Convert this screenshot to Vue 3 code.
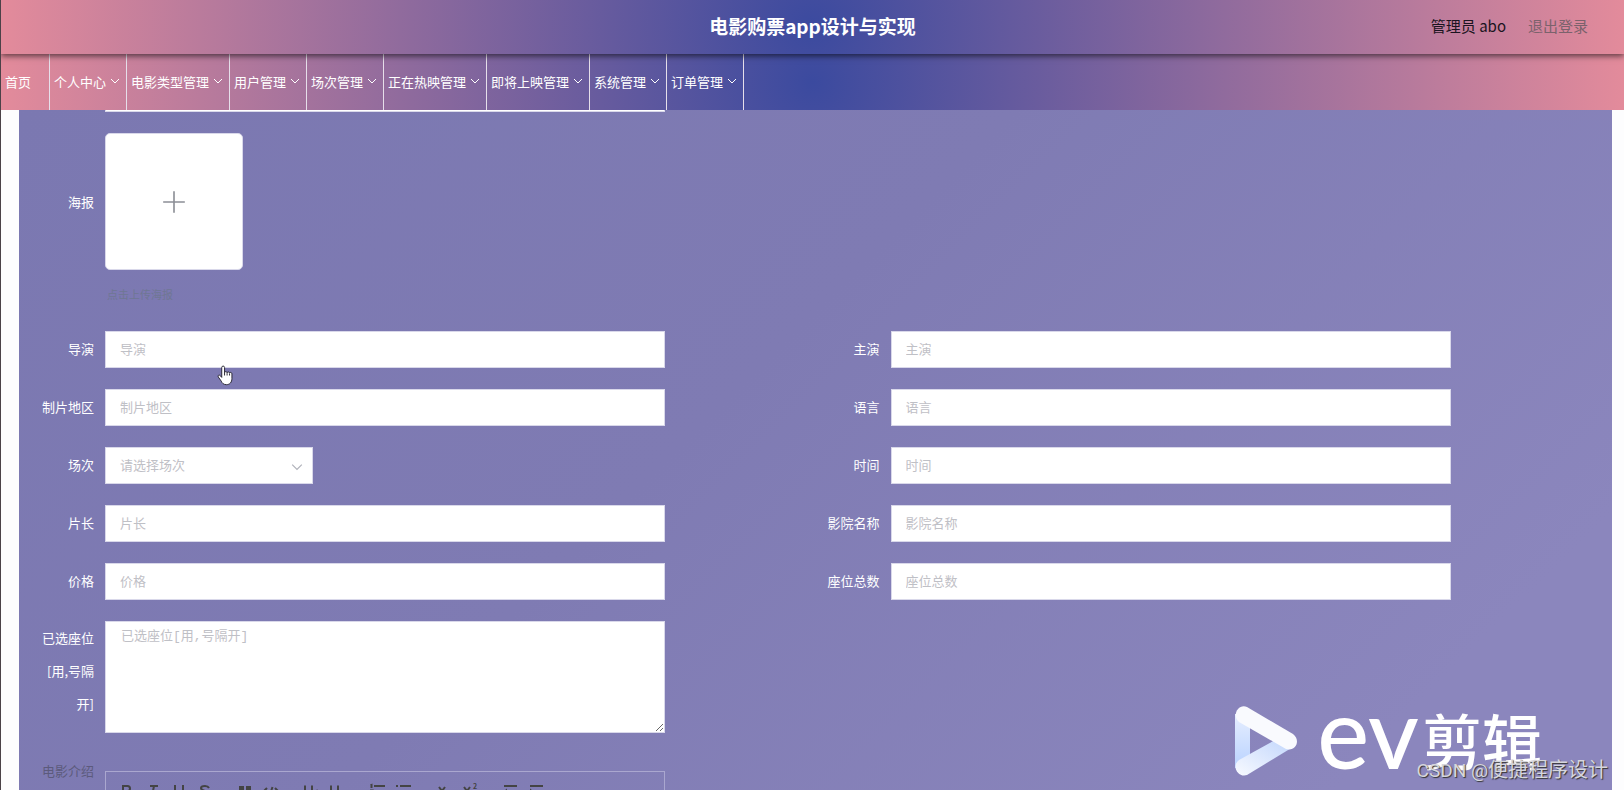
<script setup>
import { ref } from 'vue'

const menus = [
  { name: '首页', sub: false },
  { name: '个人中心', sub: true },
  { name: '电影类型管理', sub: true },
  { name: '用户管理', sub: true },
  { name: '场次管理', sub: true },
  { name: '正在热映管理', sub: true },
  { name: '即将上映管理', sub: true },
  { name: '系统管理', sub: true },
  { name: '订单管理', sub: true },
]

const form = ref({
  mingcheng: '',
  daoyan: '',
  zhuyan: '',
  diqu: '',
  yuyan: '',
  changci: '',
  shijian: '',
  pianchang: '',
  yingyuan: '',
  jiage: '',
  zuowei: '',
  yixuan: '',
})

const fields = [
  { key: 'daoyan', label: '导演' },
  { key: 'zhuyan', label: '主演' },
  { key: 'diqu', label: '制片地区' },
  { key: 'yuyan', label: '语言' },
  { key: 'changci', label: '场次', select: true },
  { key: 'shijian', label: '时间' },
  { key: 'pianchang', label: '片长' },
  { key: 'yingyuan', label: '影院名称' },
  { key: 'jiage', label: '价格' },
  { key: 'zuowei', label: '座位总数' },
]

// editor toolbar, s = stroke paths, f = filled paths, t = small digit
const tools = [
  [
    { title: '加粗', s: 'M5 4h4.5a2.5 2.5 0 0 1 0 5H5zM5 9h5.5a2.5 2.5 0 0 1 0 5H5z' },
    { title: '斜体', s: 'M6 4h8M5 14h6M8 14l2-10' },
    { title: '下划线', s: 'M5 3v6a4 4 0 0 0 8 0V3M4 15.5h10' },
    { title: '删除线', s: 'M13 6C12 4 10.500 4 9 4 6.500 4 5 4.600 5 6c0 4 8 2 8 6 0 4-7 4-8.500 1M2 9h14' },
  ],
  [
    { title: '引用', f: 'M3 4h5v6l-2 4H4l1-4H3zM10 4h5v6l-2 4h-2l1-4h-2z' },
    { title: '代码', s: 'M5 6L2 9l3 3M13 6l3 3-3 3M10.500 5l-3 9' },
  ],
  [
    { title: '标题一', s: 'M3 3.500v11M10 3.500v11M3 9h7M13 10l1.500-1v6' },
    { title: '标题二', s: 'M3 3.500v11M10 3.500v11M3 9h7M13 10.500c.5-2 4-1.500 3.500.5 0 1-3 2-3.500 4h4' },
  ],
  [
    { title: '有序列表', s: 'M6 4h11M6 9h11M6 14h11M2.500 3.500L3.500 3v3M2 8.500h2l-2 3h2' },
    { title: '无序列表', s: 'M6 4h11M6 9h11M6 14h11M2 4h2M2 9h2M2 14h2' },
  ],
  [
    { title: '下标', s: 'M5 5l6 8M11 5l-6 8', t: 'sub' },
    { title: '上标', s: 'M4 5l6 8M10 5l-6 8', t: 'sup' },
  ],
  [
    { title: '减少缩进', s: 'M4 4h13M10 9h7M4 14h13', f: 'M7 6.500v5L4 9z' },
    { title: '增加缩进', s: 'M4 4h13M10 9h7M4 14h13', f: 'M4 6.500v5L7 9z' },
  ],
]
</script>

<template>
  <div class="page">
    <header class="head">
      <h1>电影购票app设计与实现</h1>
      <div class="user">
        <span>管理员 abo</span>
        <a href="#" class="logout" @click.prevent>退出登录</a>
      </div>
    </header>

    <nav class="menu">
      <a v-for="m in menus" :key="m.name" href="#" class="menu-item" @click.prevent>
        {{ m.name }}
        <svg v-if="m.sub" class="arrow" viewBox="0 0 10 10"><path d="M1 3l4 4 4-4" /></svg>
      </a>
    </nav>

    <main class="main">
      <form class="panel" @submit.prevent>
        <div class="item wide first">
          <label for="mingcheng"></label>
          <input id="mingcheng" v-model="form.mingcheng" type="text">
        </div>

        <div class="item wide">
          <span class="label upload-label">海报</span>
          <div class="upload-box">
            <button type="button" class="upload" aria-label="上传海报">
              <svg viewBox="0 0 24 24"><path d="M12 2v20M2 12h20" /></svg>
            </button>
            <p class="tip">点击上传海报</p>
          </div>
        </div>

        <div v-for="f in fields" :key="f.key" class="item">
          <label :for="f.key">{{ f.label }}</label>
          <div v-if="f.select" class="select">
            <select :id="f.key" v-model="form[f.key]">
              <option value="">请选择场次</option>
            </select>
            <svg class="arrow" viewBox="0 0 10 10"><path d="M1 3l4 4 4-4" /></svg>
          </div>
          <input v-else :id="f.key" v-model="form[f.key]" type="text" :placeholder="f.label">
        </div>

        <div class="item wide top">
          <label for="yixuan">已选座位[用,号隔开]</label>
          <textarea id="yixuan" v-model="form.yixuan" placeholder="已选座位[用,号隔开]"></textarea>
        </div>

        <div class="item wide top">
          <span class="label dark">电影介绍</span>
          <div class="editor">
            <div class="toolbar">
              <div v-for="(group, i) in tools" :key="i" class="group">
                <button v-for="b in group" :key="b.title" type="button" :aria-label="b.title">
                  <svg viewBox="0 0 18 18">
                    <path v-if="b.s" class="line" :d="b.s" />
                    <path v-if="b.f" class="fill" :d="b.f" />
                    <text v-if="b.t" x="13" :y="b.t === 'sup' ? 7 : 16">2</text>
                  </svg>
                </button>
              </div>
            </div>
            <div class="editor-body"></div>
          </div>
        </div>
      </form>
    </main>

    <svg class="hand" viewBox="0 0 18 22">
      <path d="M5 2.500c0-2 3-2 3 0V8c0-1.500 2.700-1.500 2.700.2 0-1.400 2.600-1.300 2.600.4 0-1.300 2.500-1.200 2.500.6v5c0 4-2.300 6.500-5.800 6.500-3 0-4.500-1.500-5.500-3.700L1.300 12.500c-.8-1.700 1-2.600 2.200-1.300L5 13z" />
      <path d="M8 8v3M10.700 8.500V11M13.300 9v2" />
    </svg>

    <div class="logo">
      <svg class="play" viewBox="0 0 62 70">
        <defs>
          <linearGradient id="side" x1="0" y1="0" x2="0" y2="1">
            <stop offset="0" stop-color="#e6eeff" />
            <stop offset="1" stop-color="#b9d3ff" />
          </linearGradient>
          <linearGradient id="low" x1="0" y1="1" x2="1" y2="0">
            <stop offset="0" stop-color="#f8faff" />
            <stop offset="1" stop-color="#c0d5fc" />
          </linearGradient>
        </defs>
        <path d="M0 8h15v54H0z" fill="url(#side)" />
        <path d="M4 54L42 33l16 8-46 28C3 72-4 60 4 54z" fill="url(#low)" />
        <path d="M12 1l46 27c8 6 3 18-7 15L4 16C-4 9 4-3 12 1z" fill="#f9fafe" />
      </svg>
      <span class="ev">ev</span>
      <span class="cut">剪辑</span>
    </div>
    <div class="mark"><span>CSDN @</span>便捷程序设计</div>
  </div>
</template>

<style>
body {
  margin: 0;
  background: #fdfdfe;
}
</style>

<style scoped>
.page {
  position: relative;
  box-sizing: border-box;
  display: flex;
  flex-direction: column;
  height: 100vh;
  overflow: hidden;
  border-left: 1px solid #4b4248;
  font-family: "Noto Sans CJK SC", sans-serif;
  font-size: 13px;
}

.page * {
  box-sizing: border-box;
}

button, input, select, textarea {
  font-family: inherit;
  font-size: inherit;
}

.head {
  position: relative;
  z-index: 2;
  flex: none;
  display: grid;
  grid-template-columns: 1fr auto 1fr;
  align-items: center;
  height: 54px;
  padding: 0 36px 3px;
  background: radial-gradient(circle, #3b4a9f, #e38b9b);
  box-shadow: 0 2px 6px rgba(0, 0, 0, 0.6);
}

h1 {
  grid-column: 2;
  margin: 0;
  font-size: 19px;
  line-height: 28px;
  color: #fff;
}

.user {
  display: flex;
  justify-content: flex-end;
  gap: 22px;
  font-size: 15px;
  color: #1a1420;
}

.logout {
  color: #7b626c;
  text-decoration: none;
}

.menu {
  flex: none;
  display: flex;
  height: 56px;
  background: radial-gradient(circle, #3b4a9f, #e38b9b);
}

.menu-item {
  display: flex;
  align-items: center;
  gap: 4px;
  min-width: 49px;
  padding: 0 6px 2px 4px;
  border-right: 1px solid #e6dfea;
  color: #fff;
  text-decoration: none;
  white-space: nowrap;
}

.arrow {
  width: 10px;
  height: 10px;
  fill: none;
  stroke: currentColor;
}

.main {
  flex: 1;
  min-height: 0;
  overflow: hidden;
  padding: 0 12px 0 18px;
}

.panel {
  display: grid;
  grid-template-columns: 1fr 1fr;
  row-gap: 21px;
  padding: 0 11px;
  background: linear-gradient(135deg, #7b78b1, #7f7bb3 40%, #8b86bd 80%);
}

.item {
  display: grid;
  grid-template-columns: 75px 560fr 150fr;
  align-items: center;
}

/* one field per row, second column stays empty */
.wide {
  grid-column: 1 / 3;
  width: 50%;
}

/* scrolled under the menu */
.first {
  margin-top: -35px;
}

.top {
  align-items: start;
}

label, .label {
  padding: 0 11px 2px 10px;
  line-height: 33px;
  text-align: right;
  color: #fff;
}

.dark {
  color: #5c5a7c;
}

input, select, textarea {
  width: 100%;
  height: 37px;
  padding: 0 14px 3px;
  border: 1px solid #d9d8ea;
  border-radius: 0;
  background: #fff;
  color: #606266;
  outline: none;
}

input::placeholder, textarea::placeholder {
  color: #bfc0c6;
}

.select {
  position: relative;
  width: 208px;
}

.select select {
  display: block;
  appearance: none;
  color: #bfc0c6;
}

.select .arrow {
  position: absolute;
  top: 14px;
  right: 10px;
  width: 12px;
  height: 12px;
  color: #b0b2ba;
  pointer-events: none;
}

.upload-label {
  align-self: start;
  line-height: 137px;
}

.upload {
  display: flex;
  align-items: center;
  justify-content: center;
  width: 138px;
  height: 137px;
  padding: 0;
  border: 1px solid #d9d8ea;
  border-radius: 5px;
  background: #fff;
}

.upload svg {
  width: 26px;
  height: 26px;
  fill: none;
  stroke: #8c8f96;
  stroke-width: 1.5;
}

.tip {
  margin: 8px 0 0;
  padding-left: 2px;
  font-size: 11px;
  line-height: 32px;
  color: #6f7794;
}

textarea {
  display: block;
  height: 112px;
  padding: 6px 15px;
  font-family: "Liberation Mono", "Noto Sans CJK SC", monospace;
  line-height: 18px;
  resize: vertical;
}

.editor {
  margin-top: 17px;
  border: 1px solid #aaa7cf;
}

.toolbar {
  display: flex;
  gap: 14px;
  padding: 7px 8px;
}

.group {
  display: flex;
}

.group button {
  width: 26px;
  height: 23px;
  padding: 3px 4px;
  border: none;
  background: none;
}

.group svg {
  display: block;
  width: 18px;
  height: 18px;
}

.group text {
  font-size: 7px;
  font-weight: bold;
  fill: #444;
}

.line {
  fill: none;
  stroke: #444;
  stroke-width: 2;
}

.fill {
  fill: #444;
}

.editor-body {
  height: 200px;
}

.hand {
  position: absolute;
  top: 365px;
  left: 216px;
  width: 17px;
  height: 21px;
  fill: #fff;
  stroke: #24222f;
}

/* watermarks over the page */
.logo {
  position: absolute;
  right: 82px;
  bottom: 13px;
  display: flex;
  align-items: center;
  height: 72px;
  color: #fff;
  pointer-events: none;
}

.play {
  width: 62px;
  height: 70px;
  margin-right: 20px;
}

.ev {
  margin-bottom: 20px;
  font-family: Lato, sans-serif;
  font-size: 98px;
  font-weight: 500;
  line-height: 72px;
}

.cut {
  margin-left: 3px;
  padding-bottom: 4px;
  font-size: 60px;
  font-weight: 500;
  line-height: 72px;
}

.mark {
  position: absolute;
  right: 16px;
  bottom: 5px;
  font-size: 20px;
  line-height: 28px;
  color: #d6d6dc;
  text-shadow: 1px 1px 1px #333;
  pointer-events: none;
}

.mark span {
  font-family: Roboto, sans-serif;
  font-size: 19px;
}
</style>
